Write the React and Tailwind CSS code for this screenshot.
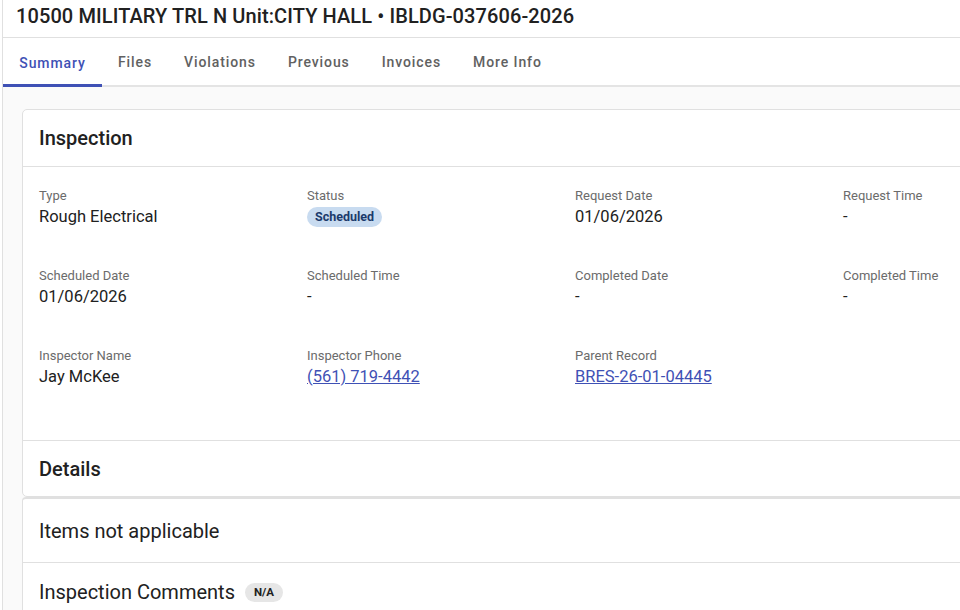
const fields = [
  { label: 'Type', value: 'Rough Electrical' },
  { label: 'Status', chip: 'Scheduled' },
  { label: 'Request Date', value: '01/06/2026' },
  { label: 'Request Time', value: '-' },
  { label: 'Scheduled Date', value: '01/06/2026' },
  { label: 'Scheduled Time', value: '-' },
  { label: 'Completed Date', value: '-' },
  { label: 'Completed Time', value: '-' },
  { label: 'Inspector Name', value: 'Jay McKee' },
  { label: 'Inspector Phone', link: '(561) 719-4442' },
  { label: 'Parent Record', link: 'BRES-26-01-04445' },
];

const tabs = ['Summary', 'Files', 'Violations', 'Previous', 'Invoices', 'More Info'];

export default function App() {
  return (
    <div
      className="w-[960px] h-[610px] overflow-hidden bg-white pl-[2px]"
      style={{ fontFamily: 'Roboto, "Liberation Sans", sans-serif' }}
    >
      <div className="h-full border-l border-[#e0e0e0] flex flex-col">
        {/* Title */}
        <div className="h-[38px] flex items-center pl-[13px] border-b border-[#e0e0e0] shrink-0">
          <h1 className="text-[20px] font-medium text-[#212121] leading-none -mt-[6px] tracking-[0.1px]">
            10500 MILITARY TRL N Unit:CITY HALL • IBLDG-037606-2026
          </h1>
        </div>

        {/* Tabs */}
        <div className="flex h-[49px] border-b-2 border-[#e4e4e4] shrink-0">
          {tabs.map((t, i) => (
            <div
              key={t}
              className={
                i === 0
                  ? 'px-4 flex items-center text-[14px] font-medium tracking-[0.9px] text-[#3f51b5] border-b-[3px] border-[#3f51b5] -mb-[2px] pt-[5px] min-w-[99px] justify-center'
                  : 'px-4 flex items-center text-[14px] font-medium tracking-[0.9px] text-[#616161] pt-[2px]'
              }
            >
              {t}
            </div>
          ))}
        </div>

        {/* Body */}
        <div className="flex-1 bg-[#fafafa] pt-[22px] pl-[19px]">
          <div className="w-[1100px] bg-white border border-[#e0e0e0] rounded-[5px]">
            <div className="h-[57px] flex items-center px-4 border-b border-[#e0e0e0]">
              <h2 className="text-[20px] font-medium text-[#212121]">Inspection</h2>
            </div>
            <div className="grid grid-cols-[268px_268px_268px_268px] pl-4 pt-[21px] pb-[12px]">
              {fields.map((f) => (
                <div key={f.label} className="h-[80px]">
                  <div className="text-[13px] text-[#6b6b6b] leading-[16px]">{f.label}</div>
                  {f.value && (
                    <div className="text-[16.5px] text-[#212121] leading-[24px] mt-[1px]">{f.value}</div>
                  )}
                  {f.chip && (
                    <div className="mt-0">
                      <span className="inline-block rounded-full bg-[#c8dbf0] text-[#1b3a6b] text-[12.5px] font-bold px-2 leading-[20px]">
                        {f.chip}
                      </span>
                    </div>
                  )}
                  {f.link && (
                    <div className="text-[16.5px] text-[#3f51b5] underline leading-[24px] mt-[1px]">{f.link}</div>
                  )}
                </div>
              ))}
            </div>
            <div className="h-[56px] flex items-center px-4 border-t border-[#e0e0e0]">
              <h2 className="text-[20px] font-medium text-[#212121]">Details</h2>
            </div>
          </div>
          <div className="w-[1100px] bg-white border-t-2 border-l border-[#e0e0e0] rounded-tl-[4px]">
            <div className="h-[64px] flex items-center px-4 border-b border-[#e0e0e0]">
              <span className="text-[20px] text-[#212121]">Items not applicable</span>
            </div>
            <div className="h-[60px] flex items-center px-4 -mt-[1px]">
              <span className="text-[20px] text-[#212121]">Inspection Comments</span>
              <span className="ml-[10px] rounded-full bg-[#e6e6e6] text-[#212121] text-[11.5px] font-bold px-[9px] leading-[19px]">
                N/A
              </span>
            </div>
          </div>
        </div>
      </div>
    </div>
  );
}
